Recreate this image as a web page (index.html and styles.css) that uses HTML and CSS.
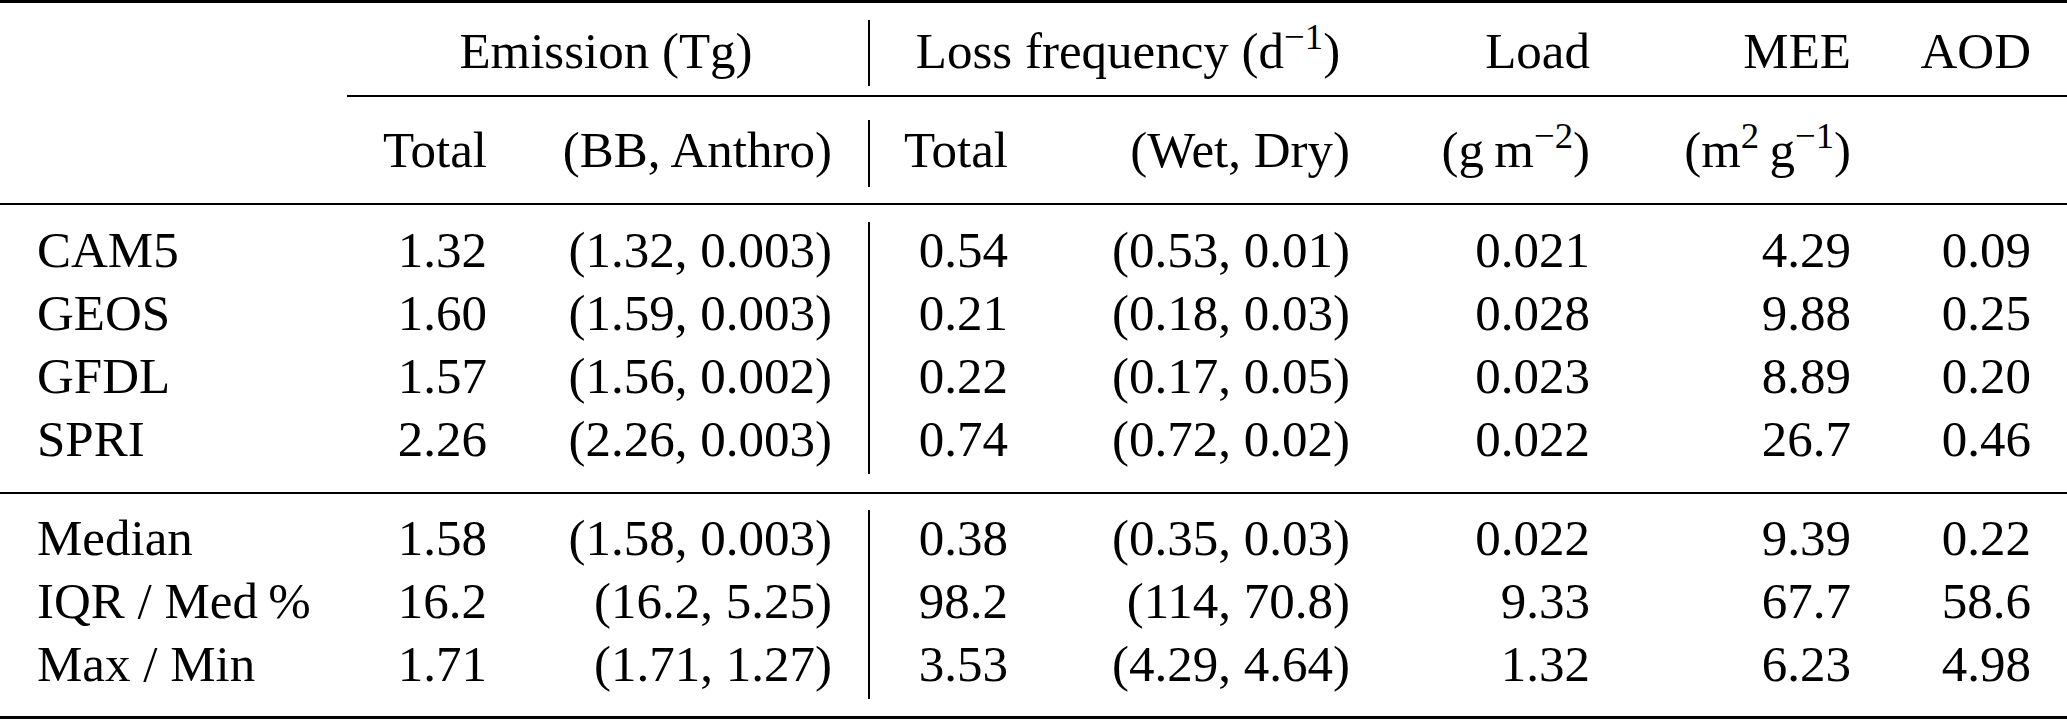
FILE: index.html
```html
<!DOCTYPE html>
<html lang="en">
<head>
<meta charset="utf-8">
<title>Aerosol model comparison</title>
<link rel="stylesheet" href="styles.css">
</head>
<body>
<table class="tbl">
  <colgroup>
    <col class="c-label"><col class="c-etot"><col class="c-ebb"><col class="c-ltot"><col class="c-lwd"><col class="c-load"><col class="c-mee"><col class="c-aod">
  </colgroup>
  <tbody>
    <tr class="gap gap-top"><td colspan="8"><div class="rule heavy"></div></td></tr>
    <tr class="head head-1">
      <td class="lbl"></td>
      <td colspan="2" class="grp">Emission (Tg)</td>
      <td colspan="2" class="grp sep">Loss frequency (d<sup>−1</sup>)</td>
      <td>Load</td>
      <td>MEE</td>
      <td>AOD</td>
    </tr>
    <tr class="gap gap-cmid"><td></td><td colspan="7"><div class="rule cmid"></div></td></tr>
    <tr class="head head-2">
      <td class="lbl"></td>
      <td>Total</td>
      <td>(BB, Anthro)</td>
      <td class="sep">Total</td>
      <td>(Wet, Dry)</td>
      <td>(g&thinsp;m<sup>−2</sup>)</td>
      <td>(m<sup>2</sup>&thinsp;g<sup>−1</sup>)</td>
      <td></td>
    </tr>
    <tr class="gap gap-mid1"><td colspan="8"><div class="rule light"></div></td></tr>
    <tr class="row"><td class="lbl">CAM5</td><td>1.32</td><td>(1.32, 0.003)</td><td class="sep">0.54</td><td>(0.53, 0.01)</td><td>0.021</td><td>4.29</td><td>0.09</td></tr>
    <tr class="row"><td class="lbl">GEOS</td><td>1.60</td><td>(1.59, 0.003)</td><td class="sep">0.21</td><td>(0.18, 0.03)</td><td>0.028</td><td>9.88</td><td>0.25</td></tr>
    <tr class="row"><td class="lbl">GFDL</td><td>1.57</td><td>(1.56, 0.002)</td><td class="sep">0.22</td><td>(0.17, 0.05)</td><td>0.023</td><td>8.89</td><td>0.20</td></tr>
    <tr class="row"><td class="lbl">SPRI</td><td>2.26</td><td>(2.26, 0.003)</td><td class="sep">0.74</td><td>(0.72, 0.02)</td><td>0.022</td><td>26.7</td><td>0.46</td></tr>
    <tr class="gap gap-mid2"><td colspan="8"><div class="rule light"></div></td></tr>
    <tr class="row"><td class="lbl">Median</td><td>1.58</td><td>(1.58, 0.003)</td><td class="sep">0.38</td><td>(0.35, 0.03)</td><td>0.022</td><td>9.39</td><td>0.22</td></tr>
    <tr class="row"><td class="lbl">IQR / Med&thinsp;%</td><td>16.2</td><td>(16.2, 5.25)</td><td class="sep">98.2</td><td>(114, 70.8)</td><td>9.33</td><td>67.7</td><td>58.6</td></tr>
    <tr class="row"><td class="lbl">Max / Min</td><td>1.71</td><td>(1.71, 1.27)</td><td class="sep">3.53</td><td>(4.29, 4.64)</td><td>1.32</td><td>6.23</td><td>4.98</td></tr>
    <tr class="gap gap-bot"><td colspan="8"><div class="rule heavy"></div></td></tr>
  </tbody>
</table>
</body>
</html>
```
FILE: styles.css
```css
html, body {
  margin: 0;
  padding: 0;
  background: #fff;
}

body {
  font-family: "Liberation Serif", Tinos, "Times New Roman", Times, "Nimbus Roman", "DejaVu Serif", serif;
  color: #000;
  overflow: hidden;
}

.tbl {
  width: 2067px;
  border-collapse: separate;
  border-spacing: 0;
  table-layout: fixed;
  font-family: "Liberation Serif", Tinos, "Times New Roman", Times, "Nimbus Roman", "DejaVu Serif", serif;
  font-size: 51px;
}

.c-label { width: 344px; }
.c-etot  { width: 179px; }
.c-ebb   { width: 345px; }
.c-ltot  { width: 176px; }
.c-lwd   { width: 342px; }
.c-load  { width: 240px; }
.c-mee   { width: 261px; }
.c-aod   { width: 180px; }

.tbl td {
  padding: 0 36px 7px 12px;
  line-height: 56px;
  text-align: right;
  white-space: nowrap;
  vertical-align: top;
  font-family: inherit;
}

.tbl td.lbl {
  text-align: left;
  padding-left: 37px;
  padding-right: 0;
}

.tbl td.grp {
  text-align: center;
  padding-left: 0;
  padding-right: 0;
}

.tbl td.sep {
  border-left: 2px solid #000;
}

.head-1 td {
  padding-top: 3px;
  padding-bottom: 7px;
}

.head-2 td {
  padding-top: 2px;
  padding-bottom: 9px;
}

sup {
  font-size: 0.72em;
  line-height: 0;
  vertical-align: 19px;
}

.tbl .gap td {
  padding: 0;
  line-height: 0;
  font-size: 0;
  vertical-align: top;
}

.gap-top td  { height: 20px; }
.gap-cmid td { height: 34px; }
.gap-mid1 td { height: 35px; }
.gap-mid2 td { height: 36px; }
.gap-bot td  { height: 21px; }

.rule {
  border-top: 2px solid #000;
}

.rule.heavy {
  border-top-width: 3px;
}

.gap-top .rule { margin-top: 0; }
.gap-cmid .rule { margin-top: 9px; margin-left: 3px; }
.gap-mid1 .rule { margin-top: 16px; }
.gap-mid2 .rule { margin-top: 18px; }
.gap-bot .rule { margin-top: 17px; }
```
